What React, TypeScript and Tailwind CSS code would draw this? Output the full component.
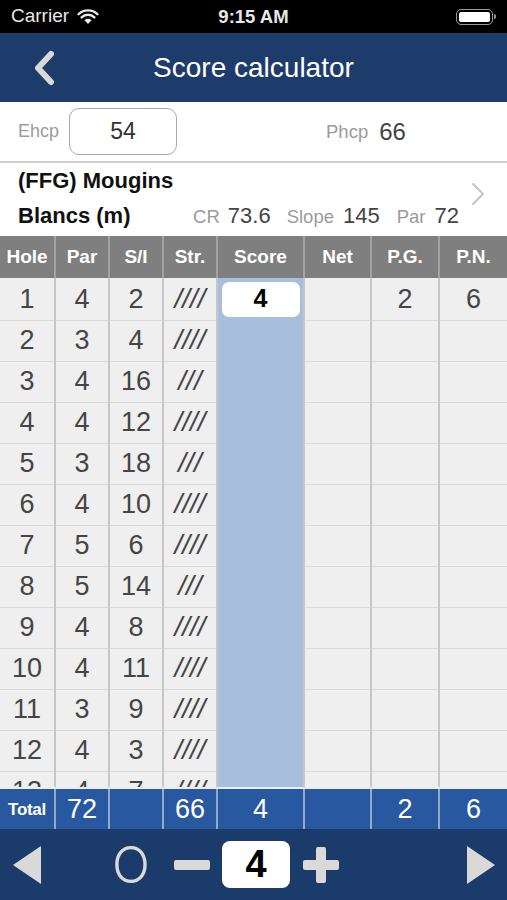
import React from 'react';

interface Hole {
  hole: number;
  par: number;
  si: number;
  strokes: number;
  score?: number;
  pg?: number;
  pn?: number;
}

const holes: Hole[] = [
  { hole: 1, par: 4, si: 2, strokes: 4, score: 4, pg: 2, pn: 6 },
  { hole: 2, par: 3, si: 4, strokes: 4 },
  { hole: 3, par: 4, si: 16, strokes: 3 },
  { hole: 4, par: 4, si: 12, strokes: 4 },
  { hole: 5, par: 3, si: 18, strokes: 3 },
  { hole: 6, par: 4, si: 10, strokes: 4 },
  { hole: 7, par: 5, si: 6, strokes: 4 },
  { hole: 8, par: 5, si: 14, strokes: 3 },
  { hole: 9, par: 4, si: 8, strokes: 4 },
  { hole: 10, par: 4, si: 11, strokes: 4 },
  { hole: 11, par: 3, si: 9, strokes: 4 },
  { hole: 12, par: 4, si: 3, strokes: 4 },
  { hole: 13, par: 4, si: 7, strokes: 4 },
  { hole: 14, par: 4, si: 1, strokes: 4 },
  { hole: 15, par: 4, si: 5, strokes: 3 },
  { hole: 16, par: 5, si: 13, strokes: 3 },
  { hole: 17, par: 4, si: 15, strokes: 4 },
  { hole: 18, par: 4, si: 17, strokes: 3 },
];

const font = { fontFamily: '"Liberation Sans", Arial, sans-serif' };

const cols = 'grid grid-cols-[56px_54px_54px_54px_87px_67px_68px_67px]';

const StatusBar = () => (
  <div className="relative h-[33px] shrink-0 bg-black text-[#e8e8e8] flex items-center">
    <span className="ml-[11px] text-[19px]">Carrier</span>
    <svg className="ml-[8px]" width="22" height="16" viewBox="0 0 22 16">
      <path d="M11 15 L7.5 11.2 A5 5 0 0 1 14.5 11.2 Z" fill="#e8e8e8" />
      <path d="M4.6 8.4 A9 9 0 0 1 17.4 8.4" stroke="#e8e8e8" strokeWidth="2.4" fill="none" strokeLinecap="round" />
      <path d="M1.6 5.2 A13.5 13.5 0 0 1 20.4 5.2" stroke="#e8e8e8" strokeWidth="2.4" fill="none" strokeLinecap="round" />
    </svg>
    <span className="absolute left-0 right-0 text-center text-[18.5px] font-semibold pointer-events-none">9:15 AM</span>
    <div className="ml-auto mr-[11px] flex items-center">
      <div className="w-[37px] h-[16px] rounded-[5px] border-[1.5px] border-[#9a9a9a] p-[2px]">
        <div className="w-full h-full bg-white rounded-[2px]" />
      </div>
      <div className="w-[2px] h-[5px] bg-[#9a9a9a] rounded-r-sm ml-[1px]" />
    </div>
  </div>
);

const NavBar = () => (
  <div className="relative h-[69px] shrink-0 bg-[#1e3c6b] flex items-center">
    <svg className="ml-[32px]" width="24" height="36" viewBox="0 0 24 36">
      <path d="M19 4 L6 18 L19 32" stroke="#d9d9d9" strokeWidth="6" fill="none" strokeLinecap="round" strokeLinejoin="round" />
    </svg>
    <span className="absolute left-0 right-0 text-center text-white text-[28px] pointer-events-none">Score calculator</span>
  </div>
);

const Slashes = ({ n }: { n: number }) => (
  <span className="italic">{'/'.repeat(n)}</span>
);

export default function App() {
  const totalPar = holes.reduce((s, h) => s + h.par, 0);
  const totalStr = holes.reduce((s, h) => s + h.strokes, 0);

  return (
    <div className="w-[507px] h-[900px] flex flex-col overflow-hidden bg-white" style={font}>
      <StatusBar />
      <NavBar />

      {/* Handicap row */}
      <div className="h-[61px] shrink-0 flex items-center border-b-2 border-[#cfcfcf]">
        <span className="ml-[18px] text-[18px] text-[#9b9b9b]">Ehcp</span>
        <div className="ml-[10px] w-[108px] h-[47px] rounded-[10px] border-[1.5px] border-[#a8a8a8] flex items-center justify-center text-[23px] text-[#333]">
          54
        </div>
        <span className="ml-[149px] text-[18.5px] text-[#9b9b9b]">Phcp</span>
        <span className="ml-[11px] text-[24px] text-[#444]">66</span>
      </div>

      {/* Course row */}
      <div className="h-[73px] shrink-0 flex items-center">
        <div className="flex-1 pl-[18px] pr-[12px] flex flex-col">
          <span className="text-[22px] font-bold text-[#111] leading-[26px]">(FFG) Mougins</span>
          <div className="flex items-baseline mt-[5px]">
            <span className="text-[22px] font-bold text-[#111] leading-[26px]">Blancs (m)</span>
            <span className="ml-auto text-[18.5px] text-[#9b9b9b]">CR</span>
            <span className="ml-[8px] text-[22px] text-[#444]">73.6</span>
            <span className="ml-[16px] text-[18.5px] text-[#9b9b9b]">Slope</span>
            <span className="ml-[9px] text-[22px] text-[#444]">145</span>
            <span className="ml-[17px] text-[18.5px] text-[#9b9b9b]">Par</span>
            <span className="ml-[9px] text-[22px] text-[#444]">72</span>
          </div>
        </div>
        <svg className="mr-[22px] mt-[-12px]" width="14" height="24" viewBox="0 0 14 24">
          <path d="M2 2 L12 12 L2 22" stroke="#c4c4c4" strokeWidth="2" fill="none" strokeLinecap="round" strokeLinejoin="round" />
        </svg>
      </div>

      {/* Table header */}
      <div className={`${cols} h-[42px] shrink-0 bg-[#7f7f7f] text-white text-[19px] font-bold`}>
        {['Hole', 'Par', 'S/I', 'Str.', 'Score', 'Net', 'P.G.', 'P.N.'].map((h, i) => (
          <div key={h} className={`flex items-center justify-center ${i < 7 ? 'border-r-2 border-[#a3a3a3]' : ''}`}>
            {h}
          </div>
        ))}
      </div>

      {/* Table body */}
      <div className="h-[509px] shrink-0 overflow-hidden bg-[#efefef]">
        {holes.map(h => (
          <div key={h.hole} className={`${cols} h-[41px] text-[27px] text-[#454545]`}>
            <div className="flex items-center justify-center border-r-2 border-b border-r-[#c6c6c6] border-b-[#dadada]">{h.hole}</div>
            <div className="flex items-center justify-center border-r-2 border-b border-r-[#c6c6c6] border-b-[#dadada]">{h.par}</div>
            <div className="flex items-center justify-center border-r-2 border-b border-r-[#c6c6c6] border-b-[#dadada]">{h.si}</div>
            <div className="flex items-center justify-center border-r-2 border-b border-r-[#c6c6c6] border-b-[#dadada] text-[28px]">
              <Slashes n={h.strokes} />
            </div>
            <div className="flex items-center justify-center border-r-2 border-b border-r-[#c6c6c6] border-b-[#e4ebf4] bg-[#a7bfdd]">
              {h.score !== undefined && (
                <div className="w-[78px] h-[35px] rounded-[7px] bg-white flex items-center justify-center text-[25px] font-bold text-black">
                  {h.score}
                </div>
              )}
            </div>
            <div className="border-r-2 border-b border-r-[#c6c6c6] border-b-[#dadada]" />
            <div className="flex items-center justify-center border-r-2 border-b border-r-[#c6c6c6] border-b-[#dadada]">{h.pg ?? ''}</div>
            <div className="flex items-center justify-center border-b border-b-[#dadada]">{h.pn ?? ''}</div>
          </div>
        ))}
      </div>

      {/* Total row */}
      <div className={`${cols} h-[42px] shrink-0 bg-[#2859a0] text-white text-[27px] border-t-2 border-[#e9eef5]`}>
        {[
          <span key="t" className="text-[17px] font-bold tracking-[-0.3px]">Total</span>,
          totalPar,
          '',
          totalStr,
          4,
          '',
          2,
          6,
        ].map((v, i) => (
          <div key={i} className={`flex items-center justify-center ${i < 7 ? 'border-r-2 border-[#8fa8cc]' : ''}`}>
            {v}
          </div>
        ))}
      </div>

      {/* Bottom toolbar */}
      <div className="h-[71px] shrink-0 bg-[#1b3b6b] flex items-center">
        <svg className="ml-[12px]" width="30" height="40" viewBox="0 0 30 40">
          <path d="M29 1 L1 20 L29 39 Z" fill="#d9d9d9" />
        </svg>
        <span className="ml-[70px] text-[50px] font-light text-[#d9d9d9] leading-none" style={{ fontFamily: 'Inter, "Liberation Sans", sans-serif' }}>
          O
        </span>
        <div className="ml-[24px] w-[36px] h-[10px] rounded-[2px] bg-[#d9d9d9]" />
        <div className="ml-[12px] w-[68px] h-[47px] rounded-[8px] bg-white flex items-center justify-center text-[38px] font-bold text-black">
          4
        </div>
        <div className="ml-[13px] relative w-[36px] h-[36px]">
          <div className="absolute left-0 right-0 top-[13px] h-[10px] rounded-[2px] bg-[#d9d9d9]" />
          <div className="absolute top-0 bottom-0 left-[13px] w-[10px] rounded-[2px] bg-[#d9d9d9]" />
        </div>
        <svg className="ml-auto mr-[11px]" width="30" height="40" viewBox="0 0 30 40">
          <path d="M1 1 L29 20 L1 39 Z" fill="#d9d9d9" />
        </svg>
      </div>
    </div>
  );
}
